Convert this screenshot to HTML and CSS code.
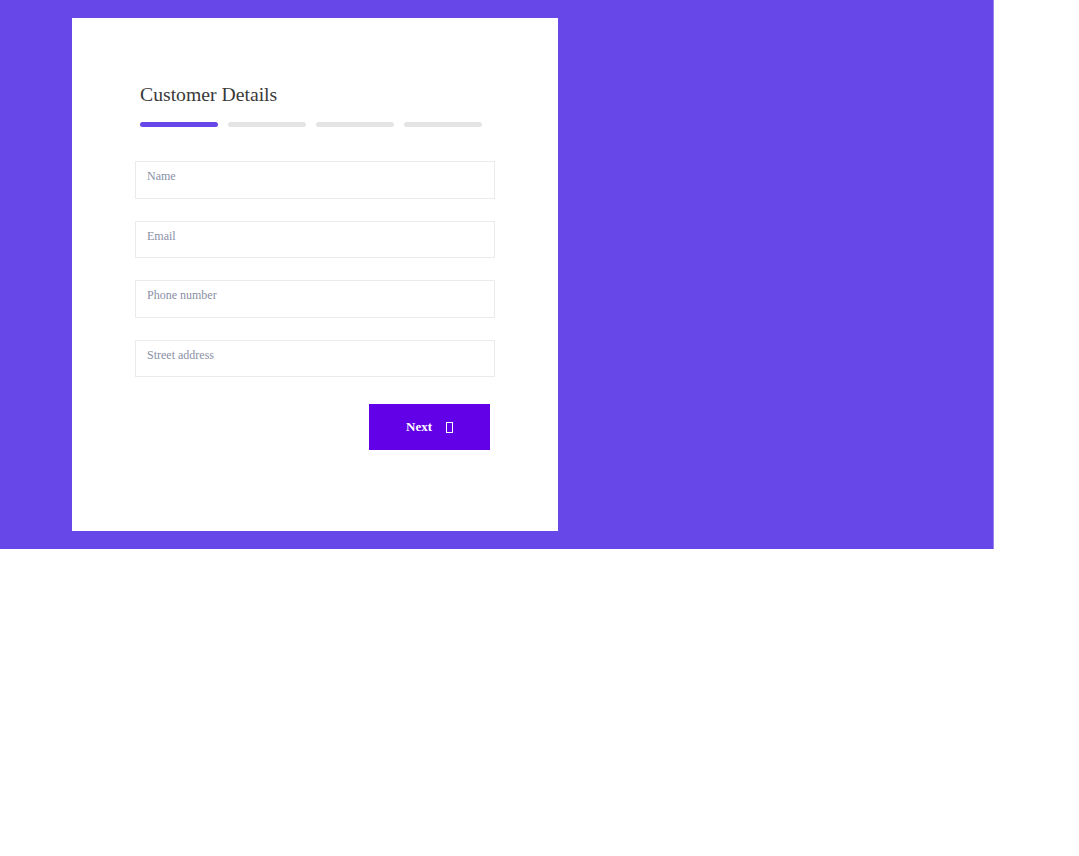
FILE: index.html
```html
<!DOCTYPE html>
<html lang="en">
<head>
  <meta charset="UTF-8">
  <meta name="viewport" content="width=device-width, initial-scale=1.0">
  <title>Customer Details</title>
  <link rel="stylesheet" href="styles.css">
</head>
<body>
  <div class="stage">
    <div class="form-card">
      <h2>Customer Details</h2>
      <div class="steps">
        <span class="step active"></span>
        <span class="step"></span>
        <span class="step"></span>
        <span class="step"></span>
      </div>
      <form class="fields">
        <input type="text" placeholder="Name">
        <input type="email" placeholder="Email">
        <input type="tel" placeholder="Phone number">
        <input type="text" placeholder="Street address">
        <div class="actions">
          <button type="button" class="next-btn">Next <span class="icon"></span></button>
        </div>
      </form>
    </div>
  </div>
</body>
</html>
```

FILE: styles.css
```css
body {
  margin: 0;
  font-family: "Liberation Serif", "Times New Roman", serif;
  background-color: #ffffff;
}
.stage {
  width: 994px;
  height: 549px;
  background-color: #6847e9;
  padding-top: 18px;
  box-sizing: border-box;
  border-right: 1px solid #9b84f2;
}
.form-card {
  margin-left: 72px;
  width: 486px;
  height: 513px;
  background-color: #ffffff;
  box-sizing: border-box;
  padding: 65px 63px 0 63px;
}
.form-card h2 {
  margin: 0 0 0 5px;
  font-size: 19.7px;
  font-weight: normal;
  color: #3a3a3a;
  line-height: 23px;
}
.steps {
  display: flex;
  gap: 10px;
  margin: 16px 0 0 5px;
}
.step {
  width: 78px;
  height: 5px;
  border-radius: 3px;
  background-color: #e4e4e4;
}
.step.active {
  background-color: #6847e9;
}
.fields {
  margin-top: 34px;
  display: flex;
  flex-direction: column;
  gap: 22px;
}
.fields input {
  width: 360px;
  height: 37.6px;
  box-sizing: border-box;
  border: 1px solid #ebebeb;
  padding: 0 11px 6px 11px;
  font-family: "Liberation Serif", "Times New Roman", serif;
  font-size: 12px;
  color: #333333;
  outline: none;
}
.fields input::placeholder {
  color: #8a8fa6;
}
.actions {
  display: flex;
  justify-content: flex-end;
  padding-right: 5px;
  margin-top: 5px;
}
.next-btn {
  width: 121px;
  height: 46px;
  border: none;
  background-color: #6200e8;
  color: #ffffff;
  font-family: "Liberation Serif", "Times New Roman", serif;
  font-size: 13px;
  font-weight: bold;
  display: flex;
  align-items: center;
  justify-content: center;
  gap: 14px;
  cursor: pointer;
}
.icon {
  display: inline-block;
  width: 5px;
  height: 9px;
  border: 1px solid #ffffff;
}
```
